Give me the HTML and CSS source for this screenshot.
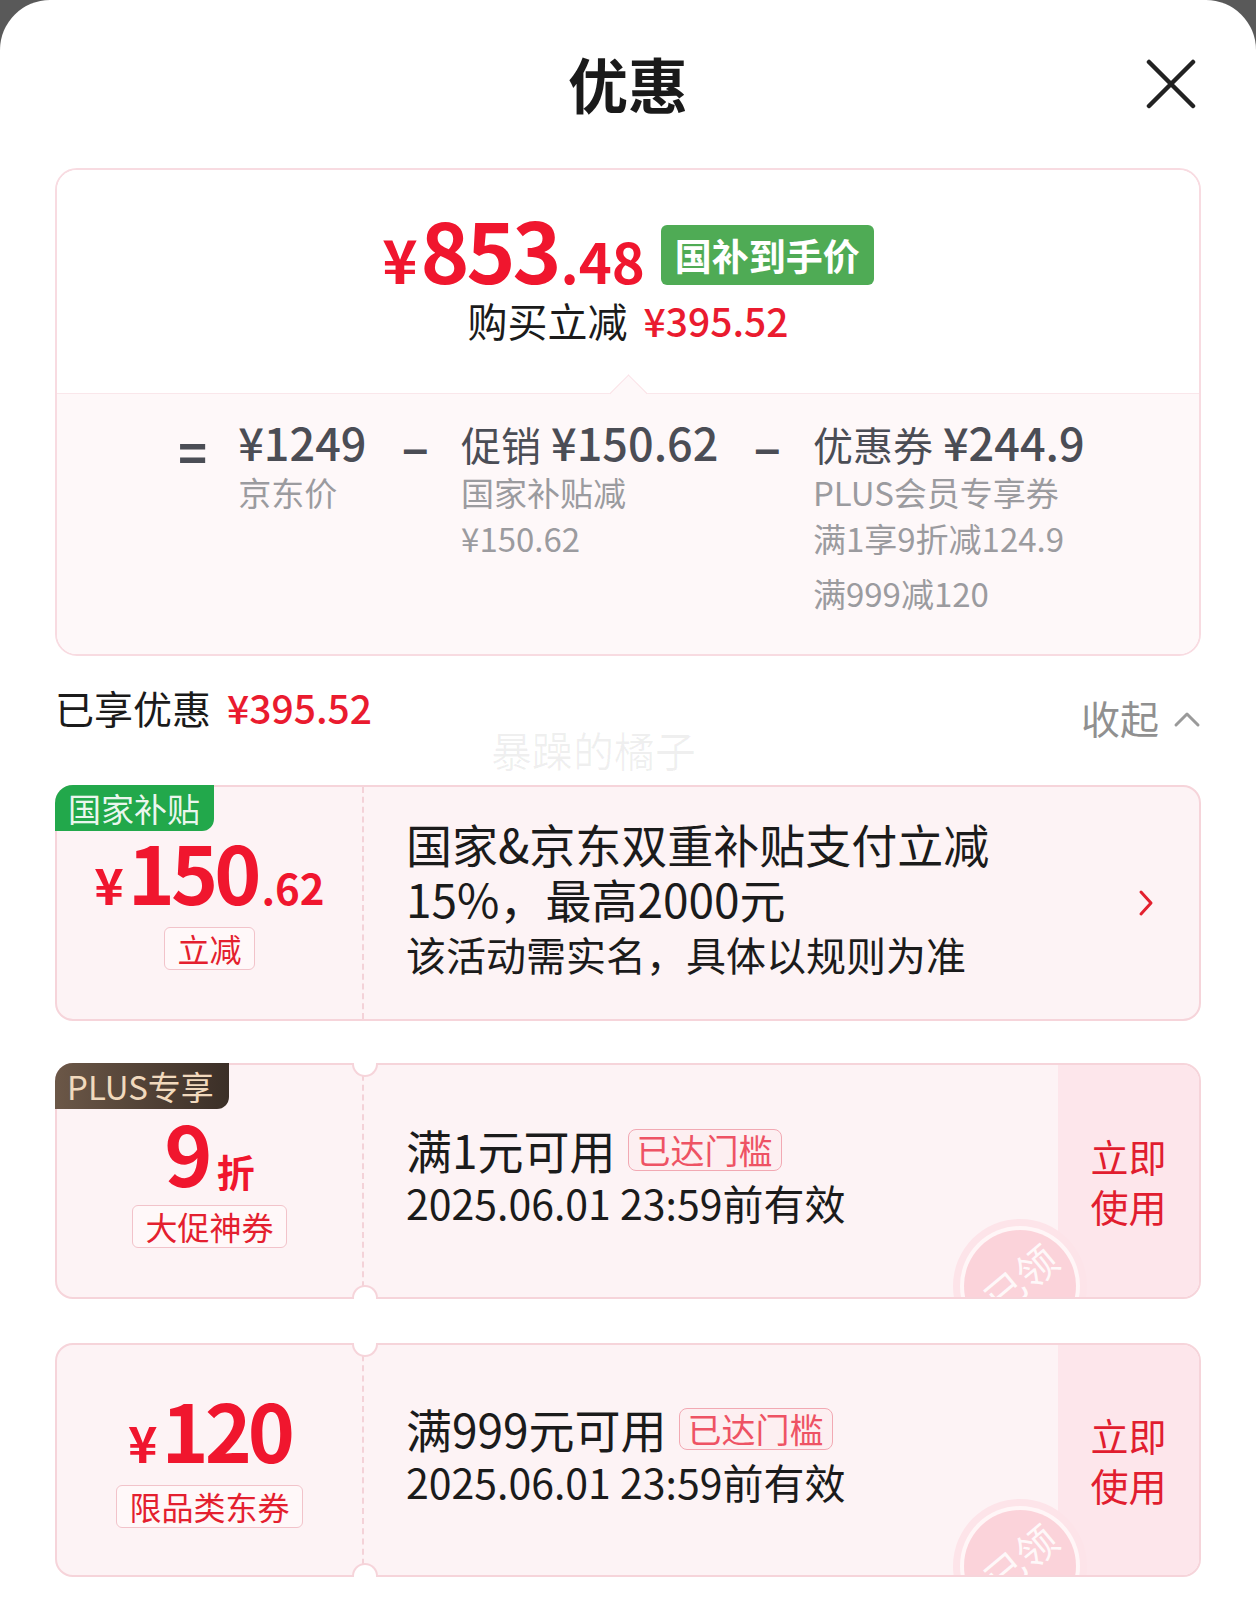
FILE: index.html
```html
<!DOCTYPE html>
<html lang="zh-CN">
<head>
<meta charset="utf-8">
<title>优惠</title>
<link rel="stylesheet" href="styles.css">
</head>
<body>
<div class="sheet">
  <header class="head">
    <span class="head-side"></span>
    <h1 class="title">优惠</h1>
    <button class="close" aria-label="关闭">
      <svg width="50" height="50" viewBox="0 0 50 50"><path d="M3 3L47 47M47 3L3 47" stroke="#222" stroke-width="4.5" stroke-linecap="round" fill="none"/></svg>
    </button>
  </header>

  <section class="summary">
    <div class="sum-top">
      <div class="final">
        <span class="final-price"><span class="cur">¥</span><span class="int">853</span><span class="dec">.48</span></span>
        <span class="badge-green">国补到手价</span>
      </div>
      <div class="reduce">购买立减<span class="red">¥395.52</span></div>
      <span class="pointer"></span>
    </div>
    <div class="sum-bottom">
      <span class="op eq">=</span>
      <div class="col c1">
        <div class="main"><span class="num">¥1249</span></div>
        <div class="sub">京东价</div>
      </div>
      <span class="op minus">–</span>
      <div class="col c2">
        <div class="main">促销<span class="num sp">¥150.62</span></div>
        <div class="sub">国家补贴减</div>
        <div class="sub">¥150.62</div>
      </div>
      <span class="op minus">–</span>
      <div class="col c3">
        <div class="main">优惠券<span class="num sp">¥244.9</span></div>
        <div class="sub">PLUS会员专享券</div>
        <div class="sub">满1享9折减124.9</div>
        <div class="sub extra">满999减120</div>
      </div>
    </div>
  </section>

  <div class="enjoyed">
    <div class="enjoyed-left">已享优惠<span class="red">¥395.52</span></div>
    <div class="fold">收起<svg width="28" height="18" viewBox="0 0 28 18"><path d="M3 15L14 4L25 15" stroke="#9a9a9a" stroke-width="3" fill="none" stroke-linecap="round" stroke-linejoin="round"/></svg></div>
    <div class="watermark">暴躁的橘子</div>
  </div>

  <div class="coupon c-sub">
    <span class="tag-corner green">国家补贴</span>
    <div class="cp-left">
      <div class="amount"><span class="a-cur">¥</span><span class="a-int">150</span><span class="a-dec">.62</span></div>
      <span class="cp-tag">立减</span>
    </div>
    <div class="cp-mid sub-mid">
      <div class="sub-text">
        <p class="big">国家&amp;京东双重补贴支付立减</p>
        <p class="big">15%，最高2000元</p>
        <p class="small">该活动需实名，具体以规则为准</p>
      </div>
      <svg class="chev" width="16" height="28" viewBox="0 0 16 28"><path d="M3 3L13 14L3 25" stroke="#e3202e" stroke-width="3" fill="none" stroke-linecap="round" stroke-linejoin="round"/></svg>
    </div>
  </div>

  <div class="coupon c-2">
    <div class="stamp-clip"><div class="stamp"><span class="stamp-in"><span class="stamp-text">已领</span></span></div></div>
    <span class="notch top"></span><span class="notch bottom"></span>
    <span class="tag-corner plus">PLUS专享</span>
    <div class="cp-left">
      <div class="amount"><span class="a-int nine">9</span><span class="a-zhe">折</span></div>
      <span class="cp-tag">大促神券</span>
    </div>
    <div class="cp-mid">
      <div class="cond">满1元可用<span class="reach">已达门槛</span></div>
      <div class="date">2025.06.01 23:59前有效</div>
    </div>
    <div class="cp-act">立即<br>使用</div>
  </div>

  <div class="coupon c-3">
    <div class="stamp-clip"><div class="stamp"><span class="stamp-in"><span class="stamp-text">已领</span></span></div></div>
    <span class="notch top"></span><span class="notch bottom"></span>
    <div class="cp-left">
      <div class="amount"><span class="a-cur">¥</span><span class="a-int">120</span></div>
      <span class="cp-tag">限品类东券</span>
    </div>
    <div class="cp-mid">
      <div class="cond">满999元可用<span class="reach">已达门槛</span></div>
      <div class="date">2025.06.01 23:59前有效</div>
    </div>
    <div class="cp-act">立即<br>使用</div>
  </div>
</div>
</body>
</html>
```

FILE: styles.css
```css
* { box-sizing: border-box; margin: 0; padding: 0; }
html, body { height: 100%; }
body {
  margin: 0;
  background: #595959;
  font-family: "Noto Sans CJK SC", "Noto Sans", sans-serif;
  color: #1b1b1b;
}
.sheet {
  background: #fff;
  border-radius: 50px 50px 0 0;
  min-height: 1598px;
  padding: 0 55px;
  position: relative;
  overflow: hidden;
}

/* header */
.head {
  height: 168px;
  display: grid;
  grid-template-columns: 1fr auto 1fr;
  align-items: center;
}
.title {
  font-size: 60px;
  font-weight: 700;
  line-height: 1;
  color: #1a1a1a;
  margin-top: -2px;
}
.close {
  justify-self: end;
  width: 50px;
  height: 50px;
  margin-right: 5px;
  border: 0;
  background: none;
  display: flex;
}

/* summary */
.summary {
  border: 2px solid #f8dbe1;
  border-radius: 22px;
  overflow: hidden;
}
.sum-top {
  position: relative;
  padding: 48px 0 48px;
  background: #fff;
}
.final {
  height: 74px;
  display: flex;
  align-items: center;
  justify-content: center;
  gap: 16px;
}
.final-price {
  color: #f0162e;
  font-weight: 700;
  line-height: 1;
  display: flex;
  align-items: baseline;
  margin-top: -14px;
}
.final-price .cur { font-size: 60px; margin-right: 3px; }
.final-price .int { font-size: 83px; letter-spacing: -3px; }
.final-price .dec { font-size: 56px; margin-left: 2px; }
.badge-green {
  background: #4fab55;
  color: #fff;
  font-size: 37px;
  font-weight: 700;
  line-height: 60px;
  height: 60px;
  padding: 0 14px;
  border-radius: 6px;
}
.reduce {
  margin-top: 3px;
  height: 50px;
  line-height: 50px;
  text-align: center;
  font-size: 40px;
  color: #1b1b1b;
}
.reduce .red {
  color: #ea1b2f;
  font-size: 39px;
  font-weight: 500;
  margin-left: 16px;
}
.pointer {
  position: absolute;
  left: 50%;
  bottom: -14px;
  width: 27px;
  height: 27px;
  margin-left: -13.5px;
  background: #fef8f9;
  border-top: 1.5px solid #fae1e6;
  border-left: 1.5px solid #fae1e6;
  transform: rotate(45deg);
  z-index: 1;
}
.sum-bottom {
  background: #fef8f9;
  border-top: 1.5px solid #fae7eb;
  padding: 23px 0 38px 121px;
  display: flex;
  align-items: flex-start;
}
.op {
  font-family: "Liberation Sans", sans-serif;
  font-weight: 700;
  color: #4b4d55;
  line-height: 50px;
}
.op.eq { font-size: 50px; margin-right: 31px; margin-top: 12px; }
.op.minus { font-size: 46px; margin: 6px 33px 0 36px; }
.col .main {
  font-size: 40px;
  line-height: 50px;
  color: #4b4d55;
  white-space: nowrap;
}
.col .num { font-size: 45px; font-weight: 500; }
.col .num.sp { margin-left: 10px; }
.col .sub {
  font-size: 33px;
  line-height: 46px;
  color: #9b9b9f;
  white-space: nowrap;
}
.col .sub.extra { margin-top: 9px; }

/* enjoyed row */
.enjoyed {
  position: relative;
  display: flex;
  justify-content: space-between;
  align-items: flex-start;
  margin-top: 26px;
  height: 50px;
}
.enjoyed-left {
  font-size: 39px;
  line-height: 50px;
  color: #1b1b1b;
}
.enjoyed-left .red {
  color: #ea1b2f;
  font-size: 39px;
  font-weight: 500;
  margin-left: 16px;
}
.fold {
  margin-top: 10px;
  font-size: 39px;
  line-height: 50px;
  color: #909090;
  display: flex;
  align-items: center;
  gap: 14px;
}
.fold svg { margin-top: 4px; }
.watermark {
  position: absolute;
  left: 436px;
  top: 42px;
  font-size: 41px;
  line-height: 50px;
  color: rgba(0, 0, 0, 0.06);
}

/* coupons */
.coupon {
  position: relative;
  margin-top: 53px;
  height: 236px;
  border: 2px solid #f6d4da;
  border-radius: 18px;
  background: #fdf3f5;
  display: grid;
  grid-template-columns: 307px 1fr 141px;
}
.coupon.c-sub { grid-template-columns: 307px 1fr; }
.coupon.c-2 { margin-top: 42px; }
.coupon.c-3 { margin-top: 44px; height: 234px; }

.tag-corner {
  position: absolute;
  left: -2px;
  top: -2px;
  height: 46px;
  line-height: 46px;
  font-size: 33px;
  padding: 0 13px;
  border-radius: 18px 0 12px 0;
  z-index: 2;
}
.tag-corner.green {
  background: #22a84b;
  color: rgba(255, 255, 255, 0.92);
  width: 159px;
}
.tag-corner.plus {
  background: linear-gradient(90deg, #6b5747, #3b2f27);
  color: #f1d9bd;
  width: 174px;
  padding: 0 12px;
}

.cp-left {
  display: flex;
  flex-direction: column;
  align-items: center;
  padding-top: 44px;
  border-right: 2px dashed #f4d2d8;
}
.amount {
  color: #f0162e;
  font-weight: 700;
  height: 78px;
  line-height: 78px;
  display: flex;
  align-items: baseline;
}
.a-cur { font-size: 50px; margin-right: 4px; }
.a-int { font-size: 80px; letter-spacing: -4px; }
.a-dec { font-size: 42px; margin-left: 4px; }
.a-int.nine { font-size: 82px; letter-spacing: 0; position: relative; top: 4px; }
.a-zhe { font-size: 38px; margin-left: 4px; position: relative; top: 4px; }
.cp-tag {
  margin-top: 18px;
  height: 43px;
  line-height: 40px;
  font-size: 32px;
  color: #e41f2f;
  padding: 0 12px;
  border: 1.5px solid #f2c3ca;
  border-radius: 6px;
  background: #fff8f9;
}

.cp-mid {
  padding-left: 42px;
  padding-bottom: 10px;
  display: flex;
  flex-direction: column;
  justify-content: center;
}
.sub-mid {
  flex-direction: row;
  align-items: center;
  justify-content: space-between;
  padding-right: 45px;
  padding-bottom: 8px;
}
.chev { margin-top: 8px; }
.sub-text .big {
  font-size: 46px;
  line-height: 55px;
  color: #1b1b1b;
}
.sub-text .small {
  font-size: 40px;
  line-height: 56px;
  color: #1b1b1b;
}
.cond {
  font-size: 46px;
  line-height: 53px;
  color: #1b1b1b;
  display: flex;
  align-items: center;
}
.reach {
  margin-left: 12px;
  font-size: 34px;
  line-height: 39px;
  height: 42px;
  padding: 0 8px;
  color: #ee5364;
  border: 1.5px solid #f2a9b3;
  border-radius: 8px;
  background: #fdeff1;
}
.date {
  font-size: 41px;
  line-height: 53px;
  color: #1b1b1b;
}
.cp-act {
  background: #fde6eb;
  border-radius: 0 16px 16px 0;
  color: #e11d2f;
  font-size: 38px;
  line-height: 50px;
  display: flex;
  align-items: center;
  justify-content: center;
  text-align: center;
}

.notch {
  position: absolute;
  left: 295px;
  width: 26px;
  height: 14px;
  background: #fff;
  border: 2px solid #f6d4da;
  z-index: 3;
}
.notch.top {
  top: -2px;
  border-top: 0;
  border-radius: 0 0 13px 13px;
}
.notch.bottom {
  bottom: -2px;
  border-bottom: 0;
  border-radius: 13px 13px 0 0;
}

.stamp-clip {
  position: absolute;
  inset: 0;
  overflow: hidden;
  border-radius: 16px;
  pointer-events: none;
  z-index: 1;
}
.stamp {
  position: absolute;
  left: 896px;
  top: 154px;
  width: 134px;
  height: 134px;
  border-radius: 50%;
  background: #fde4e9;
  display: flex;
  align-items: center;
  justify-content: center;
}
.stamp-in {
  width: 112px;
  height: 112px;
  border-radius: 50%;
  background: #fbd3da;
  box-shadow: 0 0 0 4px #fff6f7;
  display: flex;
  align-items: center;
  justify-content: center;
}
.stamp-text {
  font-size: 40px;
  color: rgba(255, 255, 255, 0.85);
  transform: translateY(-8px) rotate(-40deg);
}
```
